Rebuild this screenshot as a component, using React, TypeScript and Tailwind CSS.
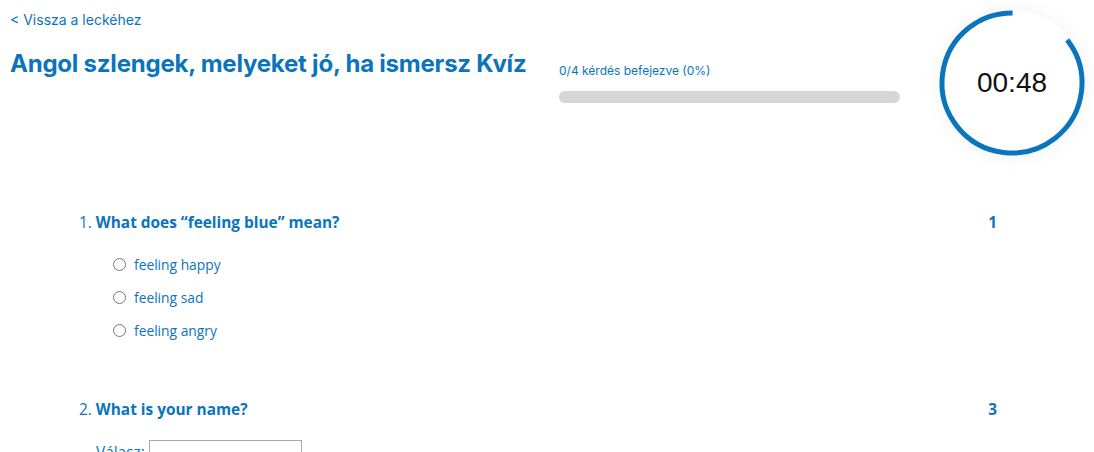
import React from "react";

const BLUE = "#0a74bd";

function Timer() {
  const r = 70;
  const c = 2 * Math.PI * r;
  const gapDeg = 52;
  const visible = c * (1 - gapDeg / 360);
  return (
    <div className="relative w-[146px] h-[146px] rounded-full bg-white shadow-[0_0_20px_rgba(0,0,0,0.06)] flex items-center justify-center">
      <svg width="146" height="146" viewBox="0 0 146 146" className="absolute inset-0">
        <circle
          cx="73"
          cy="73"
          r={r}
          fill="none"
          stroke={BLUE}
          strokeWidth="5"
          strokeDasharray={`${visible} ${c}`}
          transform={`rotate(${-90 + gapDeg} 73 73)`}
        />
      </svg>
      <span className="relative text-[28px] text-[#111] font-['Liberation_Sans',Arial,sans-serif] leading-none">00:48</span>
    </div>
  );
}

function Radio({ label }: { label: string }) {
  return (
    <label className="flex items-center h-[33px]">
      <span className="w-[13px] h-[13px] rounded-full border border-[#767676] bg-white mr-[8px] -mt-[3px]" />
      <span className="text-[13.8px] text-[#0a74bd]">{label}</span>
    </label>
  );
}

export default function App() {
  return (
    <div className="w-[1094px] h-[452px] overflow-hidden bg-white relative">
      <div className="flex">
        <div className="pl-[10px] pt-[11px] w-[559px] font-['Inter',sans-serif]">
          <div className="text-[14px] leading-[18px] text-[#0a74bd]">&lt; Vissza a leckéhez</div>
          <h1 className="mt-[20px] text-[24px] leading-[30px] font-bold text-[#0a74bd] tracking-[-0.22px]">
            Angol szlengek, melyeket jó, ha ismersz Kvíz
          </h1>
        </div>
        <div className="pt-[63px] w-[341px] font-['Inter',sans-serif]">
          <div className="text-[12px] leading-[16px] text-[#0a74bd]">0/4 kérdés befejezve (0%)</div>
          <div className="mt-[12px] h-[12px] rounded-full bg-[#d6d6d6]" />
        </div>
        <div className="ml-auto mr-[9px] mt-[10px]">
          <Timer />
        </div>
      </div>

      <div className="pl-[79px] pr-[97px] pt-[55px] font-['Open_Sans',sans-serif]">
        <div className="flex justify-between items-center h-[24px] text-[15.4px] text-[#0a74bd]">
          <div>
            1. <span className="font-bold">What does “feeling blue” mean?</span>
          </div>
          <span className="font-bold">1</span>
        </div>
        <div className="pl-[34px] pt-[14px]">
          <Radio label="feeling happy" />
          <Radio label="feeling sad" />
          <Radio label="feeling angry" />
        </div>

        <div className="mt-[50px] flex justify-between items-center h-[24px] text-[15.4px] text-[#0a74bd]">
          <div>
            2. <span className="font-bold">What is your name?</span>
          </div>
          <span className="font-bold">3</span>
        </div>
        <div className="pl-[17px] pt-[18px] flex items-start text-[15.4px] text-[#0a74bd]">
          <span className="mt-[1px] mr-[4px]">Válasz:</span>
          <span className="w-[153px] h-[24px] border border-[#aaa] bg-white" />
        </div>
      </div>
    </div>
  );
}
